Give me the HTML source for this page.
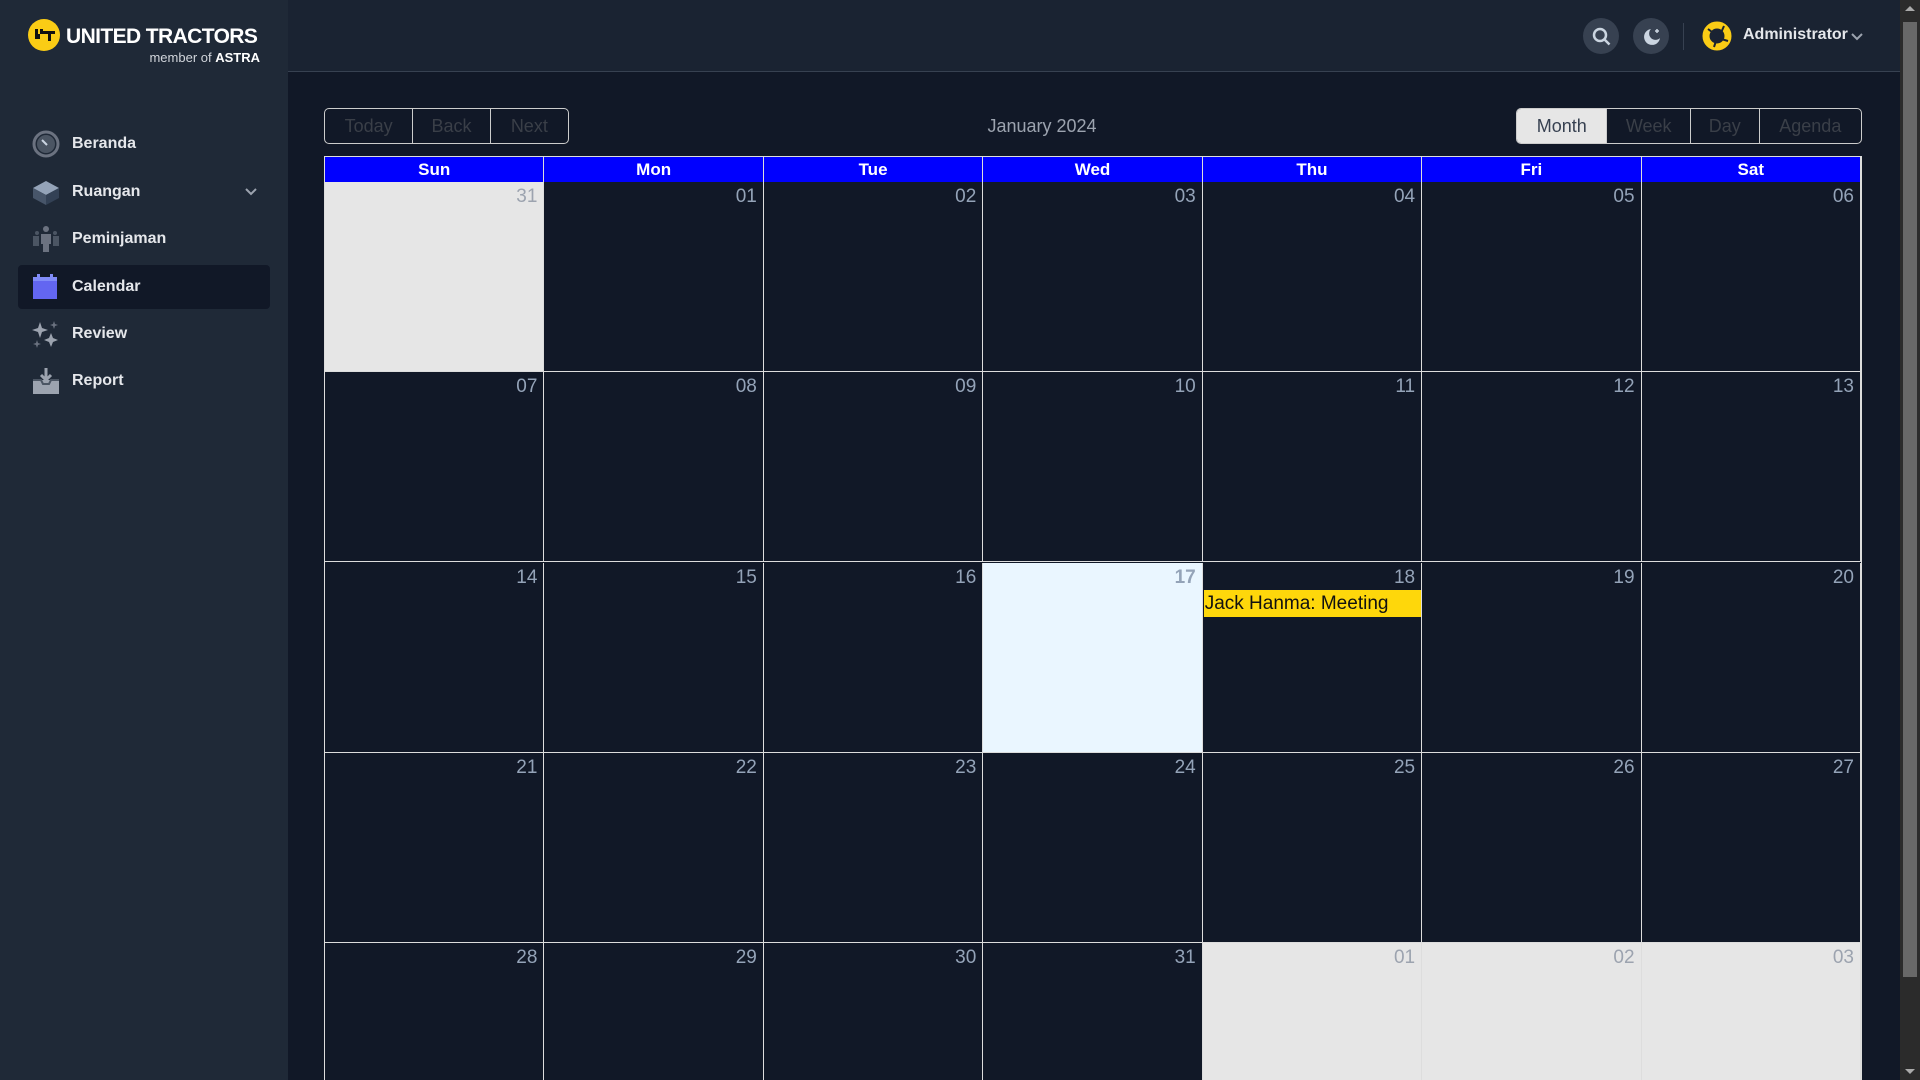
<!DOCTYPE html>
<html><head><meta charset="utf-8"><style>
*{box-sizing:border-box;margin:0;padding:0}
html{width:1920px;height:1080px;overflow:hidden}
body{width:1920px;height:1080px;overflow:hidden;background:#111827;font-family:"Liberation Sans",sans-serif;position:relative}
.side{position:absolute;left:0;top:0;width:288px;height:1080px;background:#1f2937}
.top{position:absolute;left:288px;top:0;width:1612px;height:72px;background:#1a2332;border-bottom:1px solid #374151}
.mi{position:absolute;left:18px;width:252px;height:44px;display:flex;align-items:center;color:#e5e7eb;font-size:16px;font-weight:bold;border-radius:4px}
.mi svg{position:absolute;left:14px}
.mi span{position:absolute;left:54px}
.grp{position:absolute;top:108px;height:36px;display:flex;border:1px solid #ccc;border-radius:5px;overflow:hidden}
.grp div{border-right:1px solid #ccc;color:#3a3f48;font-size:18px;display:flex;align-items:center;justify-content:center}
.grp div:last-child{border-right:none}
.cal{position:absolute;left:324px;top:156px;width:1538px;height:924px;border:1px solid #ddd;border-bottom:none;overflow:hidden}
.hd{position:absolute;top:0;height:25px;background:#0000ff;color:#fff;font-weight:bold;font-size:17px;text-align:center;line-height:25px;border-right:1px solid #ddd}
.c{position:absolute;border-right:1px solid #ddd;border-bottom:1px solid #ddd;color:#94a3b8;font-size:19px;text-align:right;padding:4px 6px 0 0}
</style></head><body>
<div class="side">
<svg style="position:absolute;left:28px;top:19px" width="32" height="32" viewBox="0 0 32 32"><circle cx="16" cy="16" r="16" fill="#facc15"/><path d="M7 10v10h5v-5h3V10h-3v5H10V10zM15 12h12v3h-4v7h-3v-7h-5z" fill="#111"/></svg>
<div style="position:absolute;left:66px;top:25px;color:#fff;font-weight:bold;font-size:21px;letter-spacing:-0.6px">UNITED TRACTORS</div>
<div style="position:absolute;right:28px;top:50px;color:#d1d5db;font-size:13px">member of <b style="color:#fff">ASTRA</b></div>
<div class="mi" style="top:122px"><svg width="28" height="28" viewBox="0 0 28 28"><circle cx="14" cy="14" r="12" fill="none" stroke="#6b7280" stroke-width="3"/><circle cx="14" cy="14" r="9" fill="#4b5563"/><path d="M10 10l5 5" stroke="#cbd5e1" stroke-width="2"/></svg><span>Beranda</span></div>
<div class="mi" style="top:170px"><svg width="28" height="28" viewBox="0 0 28 28"><path d="M14 3l13 7-13 7-13-7z" fill="#94a3b8"/><path d="M1 10l13 7v10L1 20z" fill="#475569"/><path d="M27 10l-13 7v10l13-7z" fill="#334155"/></svg><span>Ruangan</span><svg style="left:226px" width="14" height="10" viewBox="0 0 14 10"><path d="M2 2l5 5 5-5" stroke="#9ca3af" stroke-width="2" fill="none"/></svg></div>
<div class="mi" style="top:217px"><svg width="28" height="28" viewBox="0 0 28 28"><circle cx="14" cy="4" r="3" fill="#6b7280"/><circle cx="5" cy="8" r="2" fill="#4b5563"/><circle cx="23" cy="8" r="2" fill="#4b5563"/><path d="M9 9h10v10h-2v8h-6v-8H9z" fill="#6b7280"/><path d="M1 11h6v10H1zM21 11h6v10h-6z" fill="#4b5563"/></svg><span>Peminjaman</span></div>
<div class="mi" style="top:265px;background:#111827"><svg width="26" height="26" viewBox="0 0 26 26"><rect x="1" y="3" width="24" height="22" fill="#6366f1"/><rect x="1" y="3" width="24" height="4" fill="#818cf8"/><rect x="5" y="0" width="3" height="5" fill="#818cf8"/><rect x="18" y="0" width="3" height="5" fill="#818cf8"/></svg><span>Calendar</span></div>
<div class="mi" style="top:312px"><svg width="28" height="28" viewBox="0 0 28 28"><path d="M8 2l2 6 6 2-6 2-2 6-2-6-6-2 6-2z" fill="#9ca3af"/><path d="M19 13l2 5 5 2-5 2-2 5-2-5-5-2 5-2z" fill="#9ca3af"/><path d="M22 1l1 3 3 1-3 1-1 3-1-3-3-1 3-1z" fill="#6b7280"/><path d="M5 20l1 3 3 1-3 1-1 3-1-3-3-1 3-1z" fill="#6b7280"/></svg><span>Review</span></div>
<div class="mi" style="top:359px"><svg width="28" height="28" viewBox="0 0 28 28"><path d="M1 13h26v14H1z" fill="#9ca3af"/><path d="M1 13h8l2 4h6l2-4h8" fill="none" stroke="#4b5563" stroke-width="2"/><path d="M14 1v11M9 8l5 5 5-5" stroke="#9ca3af" stroke-width="3" fill="none"/></svg><span>Report</span></div>
</div>
<div class="top">
<div style="position:absolute;left:1295px;top:18px;width:36px;height:36px;border-radius:50%;background:#374151"></div>
<svg style="position:absolute;left:1304px;top:27px" width="20" height="20" viewBox="0 0 20 20"><circle cx="8" cy="8" r="6" stroke="#cbd5e1" stroke-width="2.5" fill="none"/><path d="M12.5 12.5l5 5" stroke="#cbd5e1" stroke-width="2.5"/></svg>
<div style="position:absolute;left:1345px;top:18px;width:36px;height:36px;border-radius:50%;background:#374151"></div>
<svg style="position:absolute;left:1354px;top:27px" width="20" height="20" viewBox="0 0 20 20"><path d="M9 2a8 8 0 1 0 9 9 6 6 0 0 1-9-9z" fill="#cbd5e1"/><path d="M15 2v4M13 4h4" stroke="#cbd5e1" stroke-width="1.5"/></svg>
<div style="position:absolute;left:1395px;top:23px;width:1px;height:27px;background:#374151"></div>
<svg style="position:absolute;left:1414px;top:21px" width="30" height="30" viewBox="0 0 30 30"><circle cx="15" cy="15" r="11" fill="none" stroke="#facc15" stroke-width="7"/><path d="M6 8l8 6M22 5l-4 9M26 20l-10-3M12 26l3-9" stroke="#1a2332" stroke-width="2"/></svg>
<div style="position:absolute;left:1455px;top:26px;color:#e5e7eb;font-size:16px;font-weight:bold">Administrator</div>
<svg style="position:absolute;left:1562px;top:32px" width="14" height="10" viewBox="0 0 14 10"><path d="M2 2l5 5 5-5" stroke="#9ca3af" stroke-width="2" fill="none"/></svg>
</div>
<div class="grp" style="left:324px;width:245px"><div style="width:89px">Today</div><div style="width:78px">Back</div><div style="width:78px">Next</div></div>
<div style="position:absolute;left:900px;top:116px;width:284px;text-align:center;color:#9ca3af;font-size:18px">January 2024</div>
<div class="grp" style="left:1516px;width:346px"><div style="width:91px;background:#e6e6e6;color:#374151">Month</div><div style="width:84px">Week</div><div style="width:69px">Day</div><div style="width:102px">Agenda</div></div>
<div class="cal" id="cal"></div>
<div style="position:absolute;left:1900px;top:0;width:20px;height:1080px;background:#2b2b2b"><div style="position:absolute;left:3px;top:22px;width:14px;height:955px;background:#686868"></div><div style="position:absolute;left:5px;top:6px;border:5px solid transparent;border-bottom-color:#aaa;border-top:none"></div><div style="position:absolute;left:5px;bottom:6px;border:5px solid transparent;border-top-color:#aaa;border-bottom:none"></div></div>
<script>
var cal=document.getElementById('cal'),h='',d=['Sun','Mon','Tue','Wed','Thu','Fri','Sat'],w=1536/7;
for(var i=0;i<7;i++)h+='<div class="hd" style="left:'+(i*w)+'px;width:'+w+'px">'+d[i]+'</div>';
var tops=[25,215,406,596,786];
for(var r=0;r<5;r++)for(var i=0;i<7;i++){var n=r==0?(i==0?31:i):(r*7+i);var off=false;if(r==0&&i==0)off=true;if(n>31){n-=31;off=true}
var bg=off?'#e6e6e6':(n==17?'#eaf6ff':'transparent');var col=off?'#9ca3af':'#94a3b8';
h+='<div class="c" style="left:'+(i*w)+'px;top:'+tops[r]+'px;width:'+w+'px;height:'+(r<4?190:200)+'px;background:'+bg+';color:'+col+(n==17&&!off?';font-weight:bold':'')+'">'+(n<10?'0'+n:n)+'</div>';}
h+='<div style="position:absolute;left:'+(4*w+1)+'px;top:433px;width:'+(w-2)+'px;height:27px;background:#fed70b;color:#111;font-size:19px;line-height:27px;padding-left:1px">Jack Hanma: Meeting</div>';
cal.innerHTML=h;
</script>
</body></html>
